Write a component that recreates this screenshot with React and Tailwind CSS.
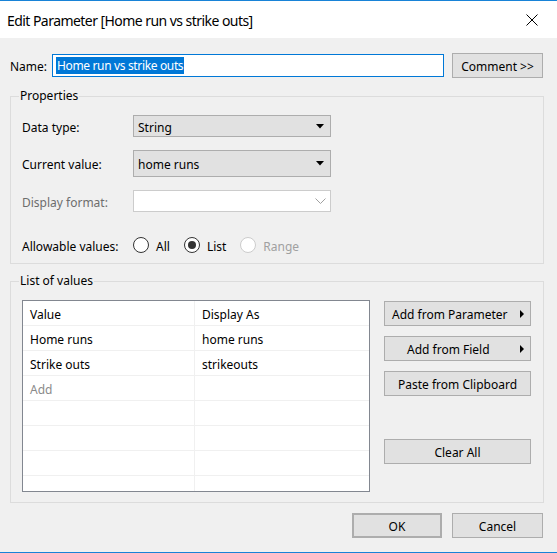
import React from 'react';

const Caret = () => (
  <svg width="8" height="5" viewBox="0 0 8 5" className="shrink-0">
    <path d="M0 0h8L4 4.5z" fill="#000" />
  </svg>
);

const RightCaret = () => (
  <svg width="4" height="8" viewBox="0 0 4 8" className="shrink-0">
    <path d="M0 0v8l4-4z" fill="#000" />
  </svg>
);

// text nudge: Noto sits a bit higher than Segoe in the same box
const T = ({ className = '', children }) => (
  <span className={`pt-[3px] leading-[16px] ${className}`}>{children}</span>
);

const Radio = ({ checked, disabled, label }) => (
  <label className={`flex items-center gap-[7px] ${disabled ? 'text-[#a0a0a0]' : ''}`}>
    <span
      className={`flex h-[16px] w-[16px] items-center justify-center rounded-full border bg-white ${
        disabled ? 'border-[#cccccc]' : 'border-[#333333]'
      }`}
    >
      {checked && <span className="h-[8px] w-[8px] rounded-full bg-[#333333]" />}
    </span>
    <T>{label}</T>
  </label>
);

const Group = ({ title, className, children }) => (
  <div className={`relative border border-[#dcdcdc] ${className}`}>
    <span className="absolute -top-[10px] left-[8px] bg-[#f0f0f0] px-[1px] leading-[18px]">{title}</span>
    {children}
  </div>
);

const Button = ({ className, children }) => (
  <button
    type="button"
    className={`flex items-center border border-[#adadad] bg-[#e1e1e1] text-black ${className}`}
  >
    {children}
  </button>
);

const rows = [
  ['Value', 'Display As'],
  ['Home runs', 'home runs'],
  ['Strike outs', 'strikeouts'],
  ['Add', ''],
  ['', ''],
  ['', ''],
  ['', ''],
  ['', ''],
];

export default function App() {
  return (
    <div className="flex h-[553px] w-[557px] flex-col border-y border-[#1883d7] bg-[#f0f0f0] font-['Segoe_UI','Noto_Sans',sans-serif] text-[12px] text-black">
      {/* title bar */}
      <div className="flex h-[37px] shrink-0 items-center justify-between bg-white pl-[7px] pr-[19px]">
        <span className="pt-[2px] text-[14px] tracking-[-0.55px]">Edit Parameter [Home run vs strike outs]</span>
        <svg width="12" height="12" viewBox="0 0 12 12" className="mt-[1px]">
          <path d="M0.5 0.5l11 11M11.5 0.5l-11 11" stroke="#000" strokeWidth="1" />
        </svg>
      </div>

      <div className="flex flex-1 flex-col pl-[10px] pr-[13px]">
        {/* name row */}
        <div className="mt-[15px] flex h-[25px] items-center">
          <T className="w-[42px]">Name:</T>
          <div className="flex h-[23px] w-[392px] items-center border border-[#0078d7] bg-white pl-[3px]">
            <span className="bg-[#0078d7] px-[1px] pt-[1px] leading-[16px] tracking-[-0.35px] text-white">
              Home run vs strike outs
            </span>
          </div>
          <Button className="ml-[8px] h-[25px] w-[91px] justify-center">
            <T>Comment &gt;&gt;</T>
          </Button>
        </div>

        {/* properties */}
        <Group title="Properties" className="mt-[18px] h-[168px] pl-[11px]">
          <div className="mt-[18px] flex h-[22px] items-center">
            <T className="w-[111px]">Data type:</T>
            <div className="flex h-[22px] w-[198px] items-center justify-between border border-[#adadad] bg-[#e1e1e1] pl-[4px] pr-[6px]">
              <T>String</T>
              <Caret />
            </div>
          </div>
          <div className="mt-[13px] flex h-[27px] items-center">
            <T className="w-[111px]">Current value:</T>
            <div className="flex h-[27px] w-[198px] items-center justify-between border border-[#adadad] bg-[#e1e1e1] pl-[4px] pr-[6px]">
              <T>home runs</T>
              <Caret />
            </div>
          </div>
          <div className="mt-[13px] flex h-[22px] items-center">
            <T className="w-[111px] text-[#6d6d6d]">Display format:</T>
            <div className="flex h-[22px] w-[198px] items-center justify-end border border-[#cccccc] bg-white pr-[4px]">
              <svg width="11" height="6" viewBox="0 0 11 6">
                <path d="M0.5 0.5l5 5 5-5" stroke="#a0a0a0" fill="none" strokeWidth="1" />
              </svg>
            </div>
          </div>
          <div className="mt-[23px] flex h-[20px] items-center">
            <T className="w-[111px]">Allowable values:</T>
            <div className="flex items-center gap-[14px]">
              <Radio label="All" />
              <Radio label="List" checked />
              <Radio label="Range" disabled />
            </div>
          </div>
        </Group>

        {/* list of values */}
        <Group title="List of values" className="mt-[17px] flex h-[222px] gap-[14px] pl-[11px] pt-[18px]">
          <div className="flex h-[192px] w-[348px] flex-col overflow-hidden border border-[#828790] bg-white">
            {rows.map(([a, b], i) => (
              <div key={i} className="flex h-[25px] shrink-0 border-b border-[#f0f0f0]">
                <div className={`flex w-[172px] items-center border-r border-[#f0f0f0] pl-[7px] ${a === 'Add' ? 'text-[#8a8a8a]' : ''}`}>
                  <T>{a}</T>
                </div>
                <div className="flex flex-1 items-center pl-[7px]">
                  <T>{b}</T>
                </div>
              </div>
            ))}
          </div>
          <div className="mt-[1px] flex w-[147px] flex-col">
            <Button className="h-[25px] justify-between pl-[7px] pr-[6px]">
              <T>Add from Parameter</T>
              <RightCaret />
            </Button>
            <Button className="mt-[10px] h-[25px] justify-between pl-[22px] pr-[6px]">
              <T>Add from Field</T>
              <RightCaret />
            </Button>
            <Button className="mt-[10px] h-[25px] justify-center">
              <T>Paste from Clipboard</T>
            </Button>
            <Button className="mt-[43px] h-[25px] justify-center">
              <T>Clear All</T>
            </Button>
          </div>
        </Group>

        {/* footer */}
        <div className="mt-[10px] mr-[1px] flex justify-end gap-[10px]">
          <Button className="h-[25px] w-[90px] justify-center border-2 border-[#0078d7]">
            <T>OK</T>
          </Button>
          <Button className="h-[25px] w-[91px] justify-center">
            <T>Cancel</T>
          </Button>
        </div>
      </div>
    </div>
  );
}
